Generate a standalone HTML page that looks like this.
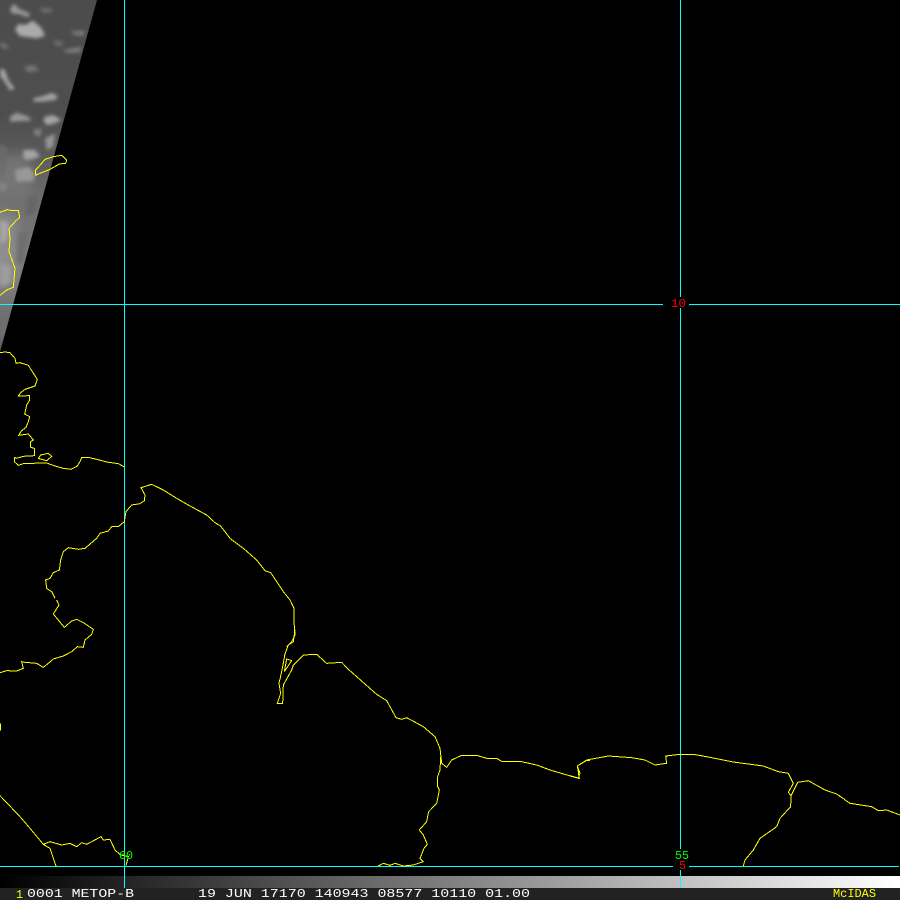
<!DOCTYPE html>
<html>
<head>
<meta charset="utf-8">
<title>METOP-B</title>
<style>
html,body{margin:0;padding:0;background:#000;width:900px;height:900px;overflow:hidden}
svg{display:block;position:absolute;left:0;top:0}
text{font-family:"Liberation Mono",monospace;font-size:12px}
.c polyline{fill:none;stroke:#ffff00;stroke-width:1;vector-effect:non-scaling-stroke;shape-rendering:crispEdges;stroke-linejoin:miter}
</style>
</head>
<body>
<svg width="900" height="900" viewBox="0 0 900 900" xmlns="http://www.w3.org/2000/svg">
<defs>
<linearGradient id="base" x1="0" y1="0" x2="0" y2="1">
<stop offset="0" stop-color="#4c4c4c"/>
<stop offset=".33" stop-color="#4e4e4e"/>
<stop offset=".45" stop-color="#5c5c5c"/>
<stop offset=".55" stop-color="#6c6c6c"/>
<stop offset=".72" stop-color="#7a7a7a"/>
<stop offset=".87" stop-color="#747474"/>
<stop offset="1" stop-color="#5a5a5a"/>
</linearGradient>
<linearGradient id="bar" x1="0" y1="0" x2="1" y2="0">
<stop offset="0" stop-color="#000"/>
<stop offset="1" stop-color="#fff"/>
</linearGradient>
<filter id="b" x="-60%" y="-60%" width="220%" height="220%"><feGaussianBlur stdDeviation="5.5"/></filter>
<filter id="b2" x="-40%" y="-40%" width="180%" height="180%"><feGaussianBlur stdDeviation="6"/></filter>
<clipPath id="sw"><polygon points="0,0 97,0 0,352"/></clipPath>
</defs>
<rect width="900" height="900" fill="#000"/>

<g clip-path="url(#sw)">
<rect x="0" y="0" width="100" height="352" fill="url(#base)"/>
<g filter="url(#b2)">
<rect x="-10" y="214" width="26" height="72" fill="#8e8e8e"/>
<rect x="-10" y="155" width="40" height="45" fill="#747474"/>
</g>
<g filter="url(#b)" transform="scale(.33333)">
<polygon fill="#aaaaaa" points="45,90 55,72 75,75 100,62 125,85 135,108 110,115 60,108"/>
<polygon fill="#989898" points="30,30 40,10 60,28 90,40 85,52 55,42 35,40"/>
<polygon fill="#727272" points="118,25 150,25 160,35 130,38"/>
<polygon fill="#a0a0a0" points="100,295 130,288 155,278 175,290 165,300 130,305 100,305"/>
<polygon fill="#a0a0a0" points="0,205 15,210 25,240 45,265 30,272 10,240 0,230"/>
<polygon fill="#989898" points="30,350 50,338 85,350 95,362 30,365"/>
<polygon fill="#a4a4a4" points="135,350 160,345 185,360 160,372 140,375 130,362"/>
<polygon fill="#747474" points="70,200 100,195 120,210 85,218"/>
<polygon fill="#7e7e7e" points="190,150 245,140 240,158 200,158"/>
<polygon fill="#7c7c7c" points="210,95 255,92 250,108 225,105"/>
<polygon fill="#747474" points="0,125 20,135 30,145 5,145"/>
<polygon fill="#6c6c6c" points="160,120 190,125 185,140 165,135"/>
<polygon fill="#a4a4a4" points="70,450 105,450 120,470 85,480 70,475"/>
<polygon fill="#989898" points="45,510 85,500 105,520 100,545 50,545"/>
<polygon fill="#949494" points="135,415 165,400 160,440 140,450"/>
<polygon fill="#828282" points="100,390 125,385 120,410 105,405"/>
<polygon fill="#848484" points="0,545 25,560 10,575 0,570"/>
<polygon fill="#6a6a6a" points="0,430 20,445 15,520 0,525"/>
<polygon fill="#666666" points="85,590 115,585 105,640 75,650"/>
<polygon fill="#a6a6a6" points="0,660 25,670 22,720 0,730"/>
<polygon fill="#9c9c9c" points="0,790 35,800 30,850 0,860"/>
<polygon fill="#6e6e6e" points="55,700 85,690 70,790 50,790"/>
<polygon fill="#707070" points="0,960 25,950 15,1000 0,1030"/>
</g>
</g>

<g fill="#00ffff" shape-rendering="crispEdges">
<rect x="124" y="0" width="1" height="888"/>
<rect x="680" y="0" width="1" height="297"/>
<rect x="680" y="308" width="1" height="541"/>
<rect x="680" y="870" width="1" height="6"/>
<rect x="0" y="304" width="663" height="1"/>
<rect x="689" y="304" width="211" height="1"/>
<rect x="0" y="866" width="673" height="1"/>
<rect x="689" y="866" width="210" height="1"/>
</g>

<g class="c">
<g transform="scale(.33333)">
<polyline points="106,526 107,510 125,490 135,478 160,470 185,466 200,480 197,490 178,492 150,508 120,520 106,526"/>
<polyline points="0,637 22,629 35,632 55,632 59,652 48,662 27,685 30,715 27,755 45,805 40,862 20,870 0,886"/>
</g>
<g transform="translate(0,340) scale(.33333)">
<polyline points="0,38 15,36 30,38 45,55 48,70 60,68 85,76 95,92 112,118 105,138 75,148 62,158 55,168 88,167 88,182 80,195 74,222 89,230 85,245 78,262 65,272 56,286 85,282 100,300 92,305 92,322 103,325 103,347 70,349 50,355 43,352 43,365 55,376 70,371 125,369 140,369 165,378 190,385 213,388 232,378 240,365 245,352 265,352 290,358 320,366 355,371 373,381"/>
<polyline points="115,355 122,345 145,340 155,349 140,362 125,358 115,355"/>
<polyline points="165,775 155,755 140,745 137,720 150,715 160,698 178,690 182,660 190,635 205,623 235,628 255,625 290,595 300,580 325,573 335,560 355,560 373,545 378,515 395,495 420,491 433,482 435,465 423,443 455,433 490,450 530,475 570,498 620,525 645,548 662,558 690,595 730,625 770,660 795,692 812,698 830,725 850,755 870,780"/>
</g>
<g transform="translate(0,600) scale(.33333)">
<polyline points="170,0 177,15 160,42 193,82 215,63 230,58 250,68 280,88 275,103 255,120 250,142 232,140 215,155 190,168 160,177 145,190 130,202 110,190 75,187 65,185 70,205 50,213 20,212 0,218"/>
<polyline points="870,0 882,25 882,65 885,105 875,125 860,140"/>
<polyline points="0,587 60,650 90,685 130,733 150,725 185,735 210,730 230,740 245,728 260,733 303,710 310,720 330,718 345,750 362,765 385,770 378,797"/>
<polyline points="130,733 150,745 160,775 168,798"/>
<polyline points="1,370 1,392"/>
</g>
<g transform="translate(270,630) scale(.33333)">
<polyline points="75,0 70,35 55,45 45,72 35,125 27,160 32,190 22,220 38,220 40,165 65,120 70,105 100,75 140,73 170,100 215,97 235,118 320,193 350,212 378,263 395,268 410,263 460,290 495,320 510,355 515,400 530,412 545,390 575,376 620,376 650,385 680,385 695,394 750,394 800,405 840,420 925,445 930,430 922,408 950,391 960,391"/>
<polyline points="43,125 50,87 65,92 43,125"/>
<polyline points="512,380 510,420 503,440 503,470 508,480 500,520 476,545 470,575 448,600 460,615 472,643 462,655 450,685 460,695 430,705 400,708 375,700 360,706 340,700 325,708"/>
</g>
<g transform="translate(570,730) scale(.33333)">
<polyline points="0,137 28,145 22,108 50,90 115,78 185,83 225,90 255,105 290,100 287,78 330,73 370,73 420,82 490,96 580,108 625,125 655,130 670,160 655,187 663,197 683,157 715,152 765,180 800,192 840,220 905,230 925,242 950,240 990,255"/>
<polyline points="663,197 662,230 630,265 620,290 570,325 550,360 525,390 520,408"/>
</g>
</g>

<rect x="0" y="876" width="900" height="12" fill="url(#bar)" shape-rendering="crispEdges"/>
<rect x="124" y="876" width="1" height="12" fill="#00ffff" shape-rendering="crispEdges"/>
<rect x="680" y="876" width="1" height="12" fill="#00ffff" shape-rendering="crispEdges"/>
<rect x="0" y="888" width="900" height="12" fill="#222" shape-rendering="crispEdges"/>

<text x="119" y="859" fill="#00ff00" textLength="14" lengthAdjust="spacingAndGlyphs">60</text>
<text x="675" y="859" fill="#00ff00" textLength="14" lengthAdjust="spacingAndGlyphs">55</text>
<text x="679" y="869" fill="#ff0000" textLength="7" lengthAdjust="spacingAndGlyphs">5</text>
<text x="671" y="307" fill="#ff0000" textLength="15" lengthAdjust="spacingAndGlyphs">10</text>
<text x="16" y="898" fill="#ffff00" textLength="7" lengthAdjust="spacingAndGlyphs">1</text>
<text x="27" y="897" fill="#ffffff" textLength="107" lengthAdjust="spacingAndGlyphs">0001 METOP-B</text>
<text x="198" y="897" fill="#ffffff" textLength="332" lengthAdjust="spacingAndGlyphs">19 JUN 17170 140943 08577 10110 01.00</text>
<text x="833" y="897" fill="#ffff00" textLength="43" lengthAdjust="spacingAndGlyphs">McIDAS</text>
</svg>
</body>
</html>
